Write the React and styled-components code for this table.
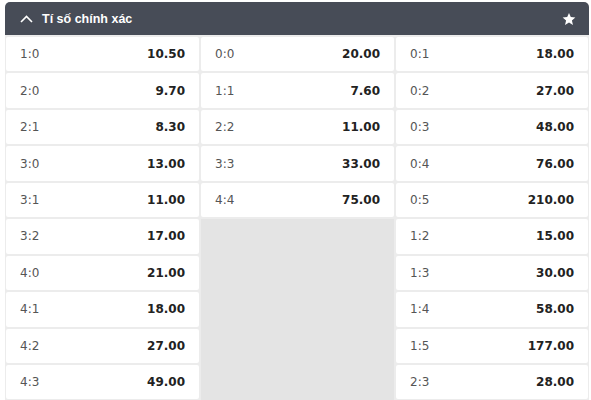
import React from "react";
import styled, { createGlobalStyle } from "styled-components";

const GlobalStyle = createGlobalStyle`
  body {
    margin: 0;
    background: #fff;
    font-family: "DejaVu Sans", Verdana, sans-serif;
  }
`;

const Panel = styled.div`
  width: 584px;
  margin: 2px 0 0 5px;
`;

const Header = styled.div`
  height: 33px;
  background: #474c57;
  border-radius: 5px 5px 0 0;
  display: flex;
  align-items: center;
  padding: 0 13px 0 15px;
  color: #fff;
`;

const Title = styled.span`
  flex: 1;
  margin-left: 9px;
  font-family: "Liberation Sans", Arial, sans-serif;
  font-weight: bold;
  font-size: 12.5px;
`;

const Body = styled.div`
  display: grid;
  grid-template-columns: 193px 193px 192px;
  gap: 2px;
  padding: 2px 1px 0 1px;
  background: #ececec;
`;

const Column = styled.div`
  display: flex;
  flex-direction: column;
  gap: 2px;
`;

const Cell = styled.div`
  height: 34.45px;
  box-sizing: border-box;
  background: #fff;
  border-radius: 2px;
  display: flex;
  align-items: center;
  justify-content: space-between;
  padding: 0 14px;
`;

const Score = styled.span`
  font-size: 12px;
  color: #555;
`;

const Odd = styled.span`
  font-size: 12px;
  font-weight: bold;
  color: #222;
`;

const Filler = styled.div`
  flex: 1;
  background: #e4e4e4;
  min-height: 200px;
`;

const columns = [
  [["1:0", "10.50"], ["2:0", "9.70"], ["2:1", "8.30"], ["3:0", "13.00"], ["3:1", "11.00"], ["3:2", "17.00"], ["4:0", "21.00"], ["4:1", "18.00"], ["4:2", "27.00"], ["4:3", "49.00"]],
  [["0:0", "20.00"], ["1:1", "7.60"], ["2:2", "11.00"], ["3:3", "33.00"], ["4:4", "75.00"]],
  [["0:1", "18.00"], ["0:2", "27.00"], ["0:3", "48.00"], ["0:4", "76.00"], ["0:5", "210.00"], ["1:2", "15.00"], ["1:3", "30.00"], ["1:4", "58.00"], ["1:5", "177.00"], ["2:3", "28.00"]],
];

export default function App() {
  return (
    <>
      <GlobalStyle />
      <Panel>
        <Header>
          <svg width="13" height="8" viewBox="0 0 13 8" fill="none">
            <path d="M1 7 L6.5 1.5 L12 7" stroke="#fff" strokeWidth="1.6" />
          </svg>
          <Title>Tí số chính xác</Title>
          <svg width="14" height="14" viewBox="0 0 24 24" fill="#fff">
            <path d="M12 1.5l3.1 7.2 7.8.7-5.9 5.2 1.8 7.7L12 18.2l-6.8 4.1 1.8-7.7-5.9-5.2 7.8-.7z" />
          </svg>
        </Header>
        <Body>
          {columns.map((col, i) => (
            <Column key={i}>
              {col.map(([s, o]) => (
                <Cell key={s}>
                  <Score>{s}</Score>
                  <Odd>{o}</Odd>
                </Cell>
              ))}
              {col.length < 10 && <Filler />}
            </Column>
          ))}
        </Body>
      </Panel>
    </>
  );
}
